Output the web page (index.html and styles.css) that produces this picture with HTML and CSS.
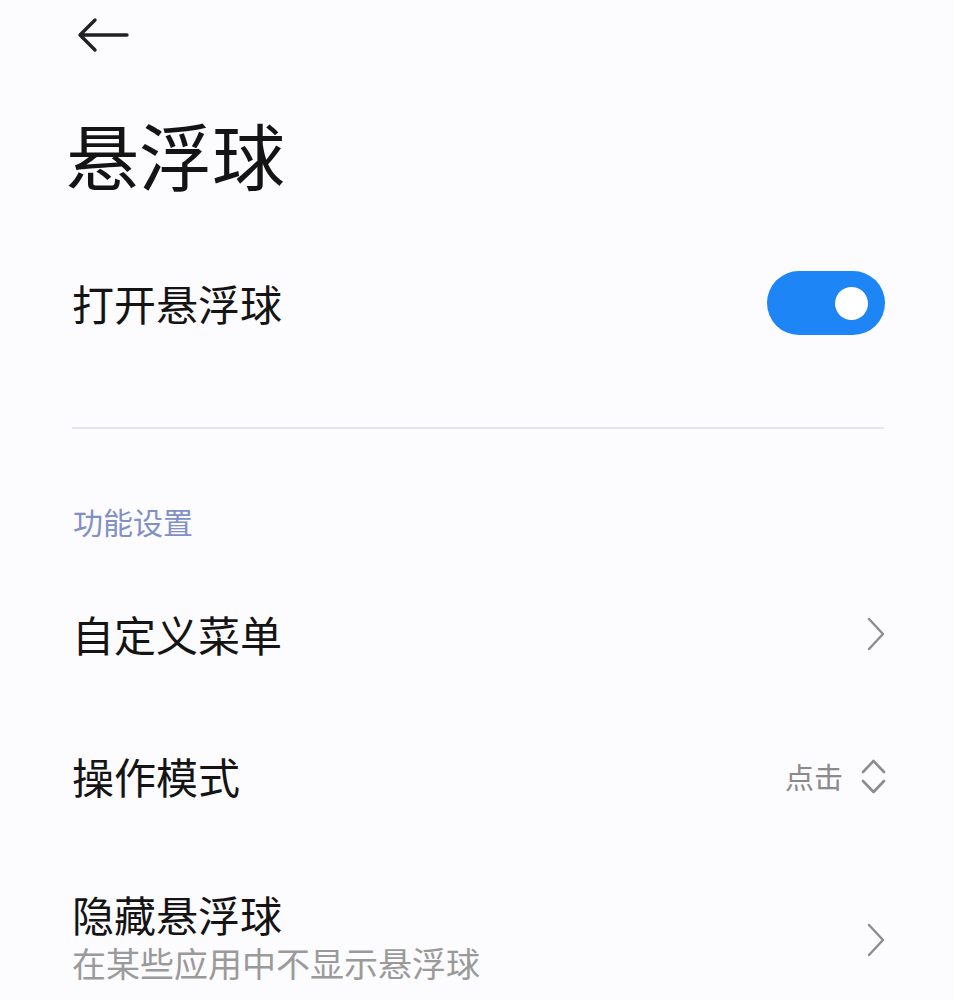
FILE: index.html
```html
<!DOCTYPE html>
<html lang="zh-CN">
<head>
<meta charset="utf-8">
<link rel="stylesheet" href="styles.css">
</head>
<body>
<div class="page">
  <div class="header">
    <svg class="back" width="54" height="38" viewBox="0 0 54 38">
      <path d="M51 19 H4 M19 4 L4 19 L19 34" fill="none" stroke="#222" stroke-width="3.4" stroke-linecap="round" stroke-linejoin="round"/>
    </svg>
  </div>
  <h1 class="title">悬浮球</h1>
  <div class="row toggle-row">
    <span class="label">打开悬浮球</span>
    <div class="switch"><div class="knob"></div></div>
  </div>
  <div class="divider"></div>
  <div class="section">功能设置</div>
  <div class="row item">
    <span class="label">自定义菜单</span>
    <svg class="chev" width="22" height="34" viewBox="0 0 22 34">
      <path d="M4 2 L18 17 L4 32" fill="none" stroke="#8c8c8c" stroke-width="2.4" stroke-linecap="round" stroke-linejoin="round"/>
    </svg>
  </div>
  <div class="row item">
    <span class="label">操作模式</span>
    <div class="value">
      <span class="value-text">点击</span>
      <svg class="updown" width="27" height="38" viewBox="0 0 27 38">
        <path d="M3 15 L13.5 4 L24 15 M3 24 L13.5 35 L24 24" fill="none" stroke="#8c8c8c" stroke-width="2.6" stroke-linecap="round" stroke-linejoin="round"/>
      </svg>
    </div>
  </div>
  <div class="row item item-two">
    <div class="texts">
      <span class="label">隐藏悬浮球</span>
      <span class="sub">在某些应用中不显示悬浮球</span>
    </div>
    <svg class="chev chev-low" width="22" height="34" viewBox="0 0 22 34">
      <path d="M4 2 L18 17 L4 32" fill="none" stroke="#8c8c8c" stroke-width="2.4" stroke-linecap="round" stroke-linejoin="round"/>
    </svg>
  </div>
</div>
</body>
</html>
```

FILE: styles.css
```css
html, body {
  margin: 0;
  padding: 0;
  background: #fcfbfe;
}
.page {
  width: 954px;
  height: 1000px;
  overflow: hidden;
  font-family: "Noto Sans CJK SC", "Noto Sans", sans-serif;
  color: #141414;
}
.header {
  height: 70px;
  display: flex;
  align-items: center;
  padding-left: 76px;
}
.back {
  display: block;
}
.title {
  margin: 42px 0 0 0;
  padding-left: 66px;
  font-size: 73px;
  line-height: 82px;
  font-weight: 400;
  letter-spacing: 0;
}
.row {
  display: flex;
  align-items: center;
  justify-content: space-between;
  padding: 0 69px 0 72px;
}
.label {
  font-size: 42px;
  line-height: 52px;
}
.toggle-row {
  height: 120px;
  margin-top: 49px;
}
.switch {
  width: 118px;
  height: 64px;
  border-radius: 32px;
  background: #1d85f6;
  display: flex;
  align-items: center;
  justify-content: flex-end;
  padding-right: 17px;
  box-sizing: border-box;
}
.knob {
  width: 33px;
  height: 33px;
  border-radius: 50%;
  background: #ffffff;
}
.divider {
  height: 2px;
  background: #e6e5ec;
  margin: 64px 70px 0 72px;
}
.section {
  margin-top: 62px;
  padding-left: 73px;
  font-size: 30px;
  line-height: 60px;
  color: #8190c6;
}
.item {
  height: 120px;
  margin-top: 23px;
}
.item + .item {
  margin-top: 22px;
}
.chev {
  display: block;
  margin-right: -2px;
}
.value {
  display: flex;
  align-items: center;
  gap: 17px;
}
.value-text {
  font-size: 29px;
  line-height: 40px;
  color: #8a8a8a;
}
.updown {
  display: block;
  margin-right: -2px;
}
.item-two {
  height: auto;
  padding-top: 28px;
  align-items: flex-start;
}
.texts {
  display: flex;
  flex-direction: column;
}
.texts .label {
  line-height: 56px;
}
.sub {
  font-size: 34px;
  line-height: 42px;
  color: #9a9a9a;
}
.chev-low {
  margin-top: 37px;
}
```
